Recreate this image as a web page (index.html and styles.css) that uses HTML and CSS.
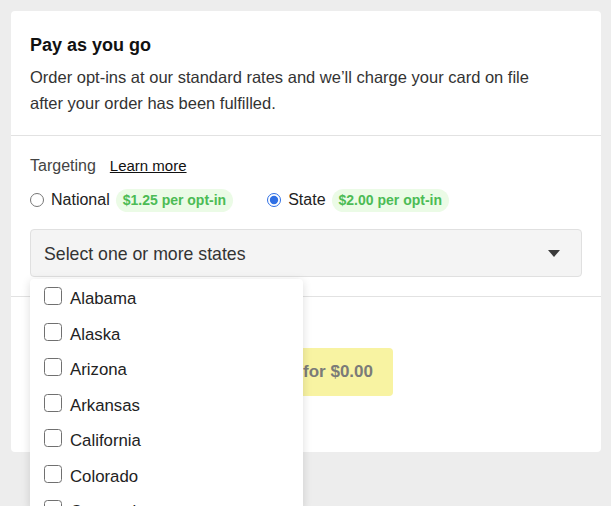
FILE: index.html
```html
<!DOCTYPE html>
<html>
<head>
<meta charset="utf-8">
<link rel="stylesheet" href="styles.css">
</head>
<body>
<div class="card">
  <div class="section head">
    <h2 class="title">Pay as you go</h2>
    <p class="desc">Order opt-ins at our standard rates and we’ll charge your card on file after your order has been fulfilled.</p>
  </div>
  <div class="section targeting">
    <div class="label-row">
      <span class="label">Targeting</span>
      <a class="learn" href="#">Learn more</a>
    </div>
    <div class="radio-row">
      <label class="opt"><input type="radio" name="t"><span class="opt-name">National</span><span class="pill">$1.25 per opt-in</span></label>
      <label class="opt"><input type="radio" name="t" checked><span class="opt-name">State</span><span class="pill">$2.00 per opt-in</span></label>
    </div>
    <div class="select-wrap">
      <div class="select">
        <span>Select one or more states</span>
        <span class="caret"></span>
      </div>
      <ul class="menu">
        <li><span class="box"></span>Alabama</li>
        <li><span class="box"></span>Alaska</li>
        <li><span class="box"></span>Arizona</li>
        <li><span class="box"></span>Arkansas</li>
        <li><span class="box"></span>California</li>
        <li><span class="box"></span>Colorado</li>
        <li><span class="box"></span>Connecticut</li>
      </ul>
    </div>
  </div>
  <div class="section footer">
    <button class="buy" disabled>Order opt-ins for $0.00</button>
  </div>
</div>
</body>
</html>
```

FILE: styles.css
```css
html, body {
  margin: 0;
  padding: 0;
}
body {
  background: #ededed;
  padding: 11px;
  height: 506px;
  box-sizing: border-box;
  overflow: hidden;
  font-family: "Liberation Sans", Arial, Helvetica, sans-serif;
  color: #333;
}
.card {
  width: 590px;
  background: #fff;
  border-radius: 4px;
}
.section {
  padding: 0 19px;
}
.head {
  padding-top: 23px;
  padding-bottom: 19px;
  border-bottom: 1px solid #e2e2e2;
}
.title {
  margin: 0;
  font-size: 18px;
  line-height: 22px;
  font-weight: bold;
  color: #111;
}
.desc {
  margin: 8px 0 0;
  font-size: 16.5px;
  line-height: 26px;
  color: #333;
  width: 530px;
}
.targeting {
  padding-top: 20px;
  padding-bottom: 19px;
  border-bottom: 1px solid #e2e2e2;
}
.label-row {
  display: flex;
  align-items: baseline;
  gap: 14px;
  font-size: 16px;
  line-height: 20px;
}
.label {
  color: #444;
}
.learn {
  color: #111;
  font-size: 15px;
  text-decoration: underline;
}
.radio-row {
  margin-top: 12px;
  display: flex;
  align-items: center;
  gap: 34px;
  height: 24px;
}
.opt {
  display: flex;
  align-items: center;
  font-size: 16px;
  color: #222;
}
.opt input {
  width: 14px;
  height: 14px;
  margin: 0 7px 0 0;
  accent-color: #2f6fe4;
}
.pill {
  margin-left: 6px;
  background: #ebfbe6;
  color: #4cbb55;
  font-weight: bold;
  font-size: 14px;
  line-height: 23px;
  padding: 0 7px;
  border-radius: 12px;
}
.select-wrap {
  position: relative;
  margin-top: 17px;
}
.select {
  height: 48px;
  box-sizing: border-box;
  background: #f4f4f4;
  border: 1px solid #e0e0e0;
  border-radius: 4px;
  display: flex;
  align-items: center;
  justify-content: space-between;
  padding: 3px 21px 0 13px;
  font-size: 17.7px;
  color: #333;
}
.caret {
  width: 0;
  height: 0;
  margin-top: -3px;
  border-left: 6.5px solid transparent;
  border-right: 6.5px solid transparent;
  border-top: 7px solid #3a3a3a;
}
.menu {
  position: absolute;
  top: 50px;
  left: 0;
  width: 273px;
  height: 230px;
  overflow: hidden;
  margin: 0;
  padding: 8px 0 0;
  box-sizing: border-box;
  list-style: none;
  background: #fff;
  border-radius: 4px;
  box-shadow: 0 2px 10px rgba(0, 0, 0, 0.14);
  z-index: 2;
}
.menu li {
  display: flex;
  align-items: flex-start;
  gap: 8px;
  height: 35.5px;
  padding-left: 14px;
  font-size: 16.8px;
  line-height: 23px;
  color: #222;
}
.box {
  width: 18px;
  height: 18px;
  box-sizing: border-box;
  border: 1.5px solid #707070;
  border-radius: 3.5px;
  flex: none;
}
.footer {
  padding-top: 51px;
  padding-bottom: 56px;
}
.buy {
  display: block;
  width: 363px;
  height: 48px;
  border: none;
  border-radius: 4px;
  background: #f8f3a2;
  color: #7b7b78;
  font-family: inherit;
  font-size: 17px;
  font-weight: bold;
  text-align: right;
  padding: 0 20px;
}
```
